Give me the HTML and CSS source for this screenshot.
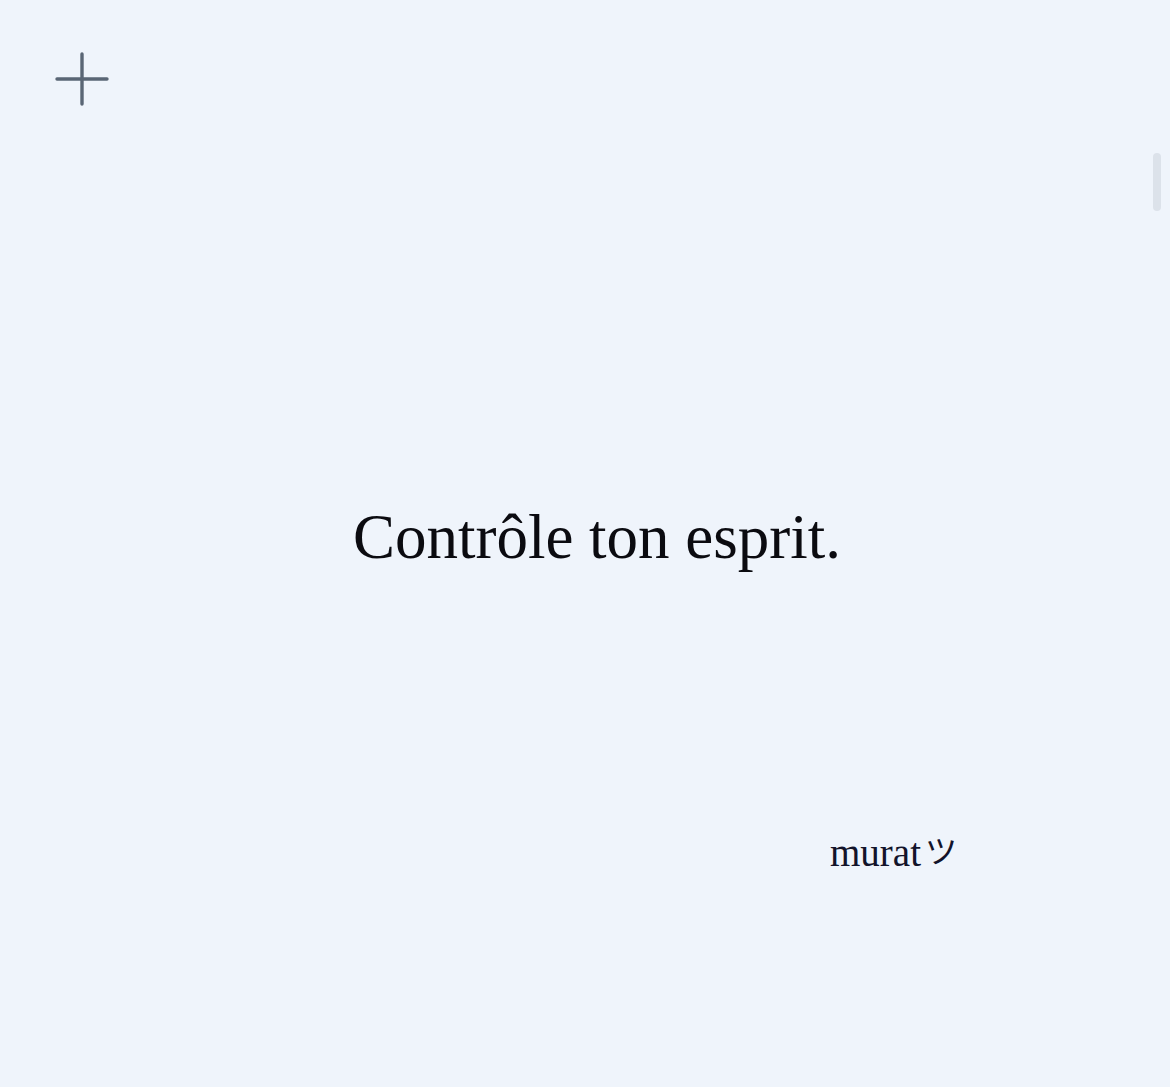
FILE: index.html
```html
<!DOCTYPE html>
<html lang="fr">
<head>
    <meta charset="UTF-8">
    <meta name="viewport" content="width=device-width, initial-scale=1.0">
    <title>Contrôle ton esprit.</title>
    <link rel="stylesheet" href="styles.css">
</head>
<body>
    <header class="topbar">
        <button class="add-button" aria-label="Ajouter">
            <svg width="54" height="54" viewBox="0 0 54 54">
                <path d="M27 2 V52 M2 27 H52" stroke="#5a6675" stroke-width="3.4" stroke-linecap="round" fill="none"/>
            </svg>
        </button>
    </header>

    <main class="page">
        <section class="note">
            <p class="quote">Contrôle ton esprit.</p>
            <p class="signature">murat<span class="smiley">ツ</span></p>
        </section>
    </main>

    <div class="scroll-thumb"></div>
</body>
</html>
```

FILE: styles.css
```css
:root {
    --bg: #eff4fb;
    --ink: #0b0b10;
    --icon: #5a6675;
}

* {
    box-sizing: border-box;
    margin: 0;
    padding: 0;
}

body {
    background-color: var(--bg);
    color: var(--ink);
    font-family: 'Liberation Serif', 'Noto Sans CJK JP', serif;
    height: 1087px;
    overflow: hidden;
    display: flex;
    flex-direction: column;
}

.topbar {
    padding: 52px 0 0 55px;
}

.add-button {
    background: none;
    border: none;
    display: block;
    cursor: pointer;
}

.add-button svg {
    display: block;
}

.page {
    flex: 1;
    display: flex;
    justify-content: center;
}

.note {
    width: 720px;
    margin-left: 24px;
    padding-top: 400px;
}

.quote {
    text-align: center;
    font-size: 63px;
    line-height: 1;
}

.signature {
    text-align: right;
    font-size: 39px;
    line-height: 1;
    margin-top: 264px;
    color: #12132a;
}

.smiley {
    font-size: 32px;
    margin-left: 4px;
    vertical-align: 3px;
}

.scroll-thumb {
    position: absolute;
    top: 153px;
    right: 9px;
    width: 8px;
    height: 58px;
    border-radius: 4px;
    background-color: #dce2ea;
}
```
